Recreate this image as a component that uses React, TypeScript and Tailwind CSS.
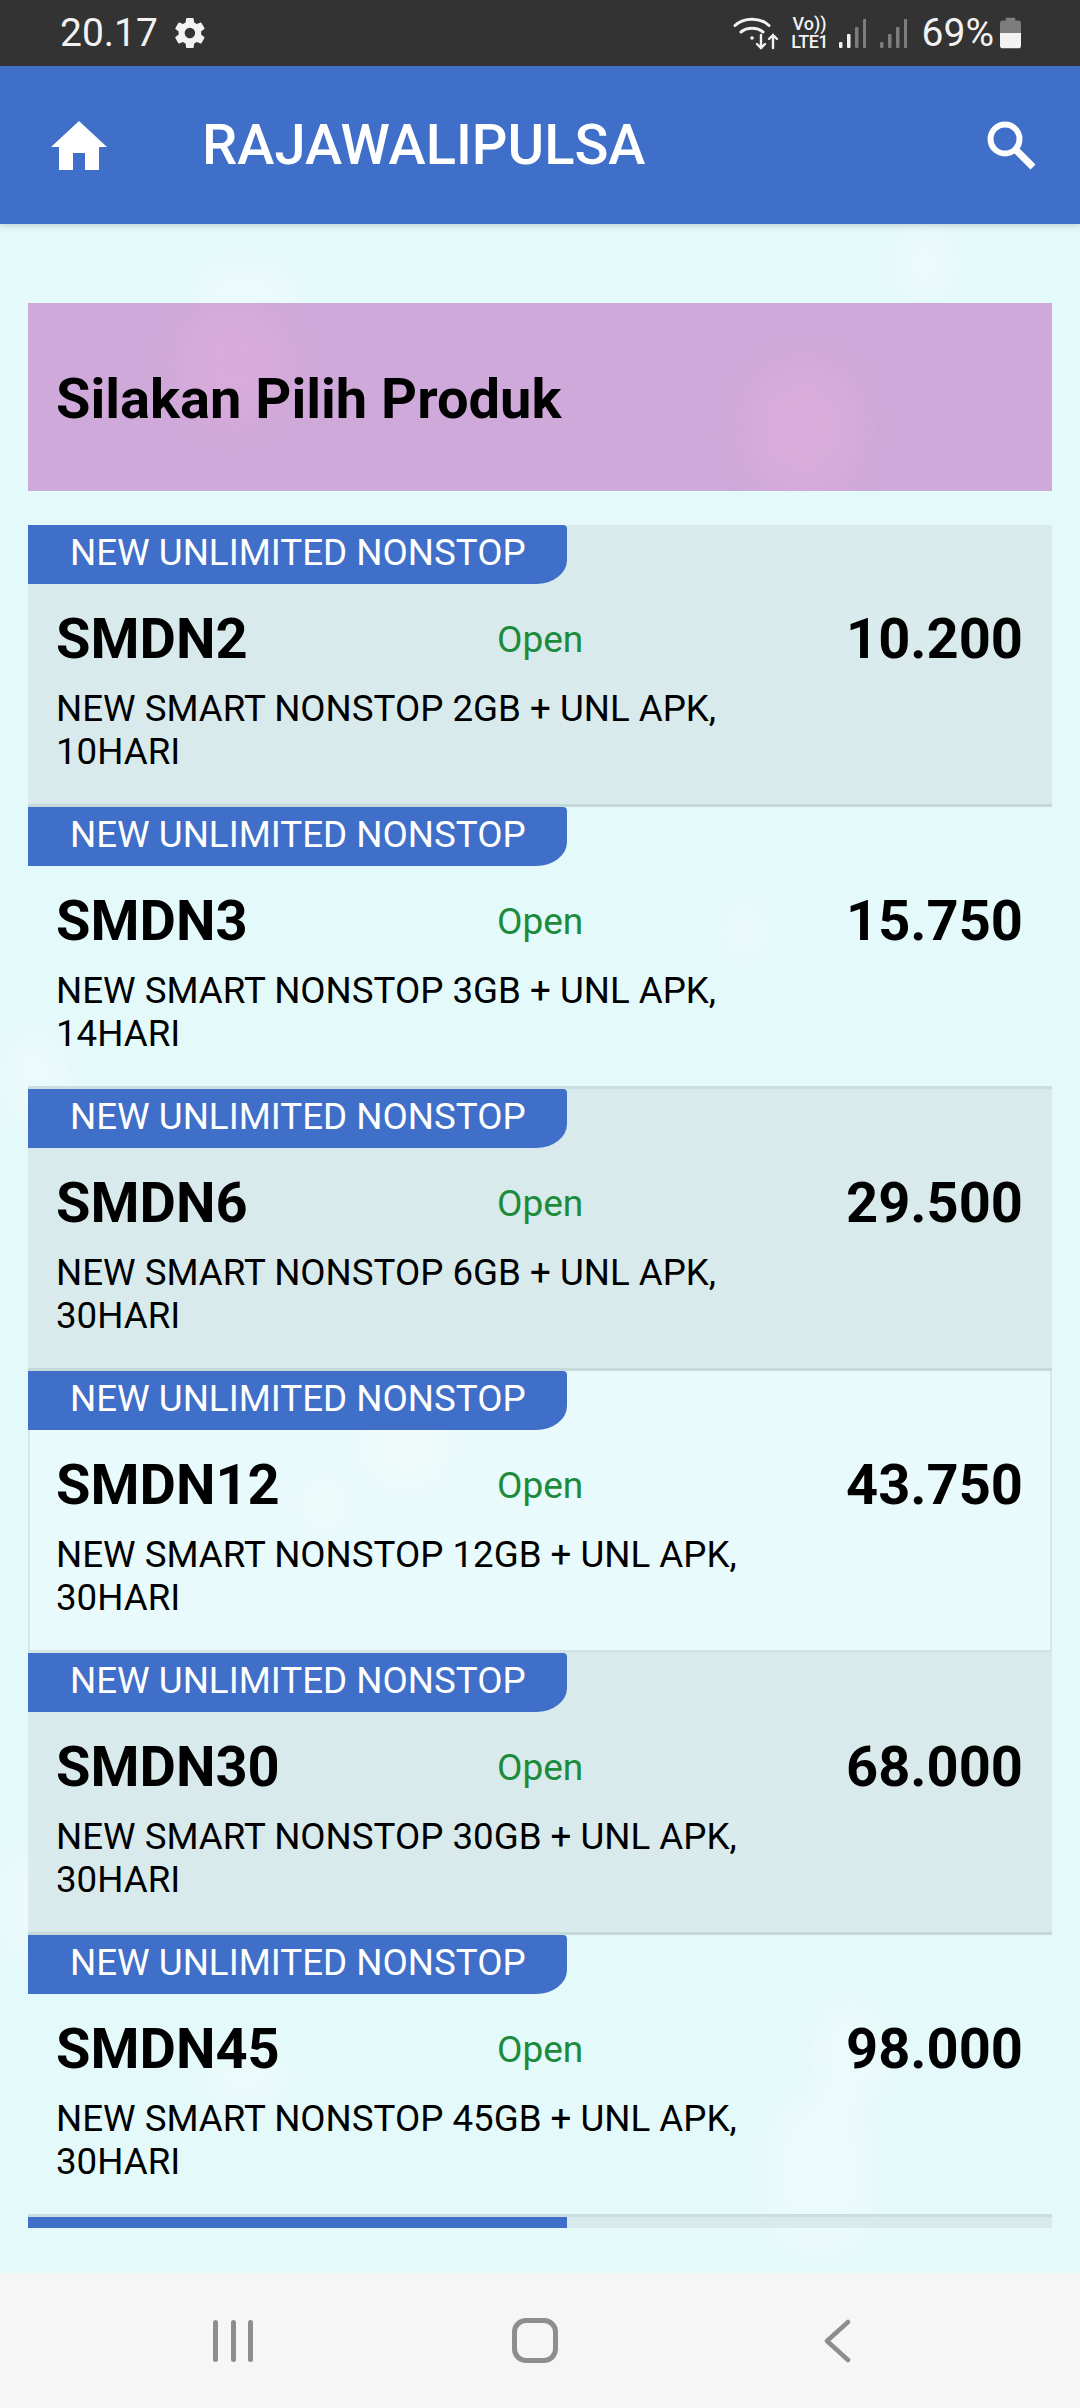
const ROBOTO = "font-['Roboto',sans-serif]";

const products = [
  { code: "SMDN2", desc: "NEW SMART NONSTOP 2GB + UNL APK,", days: "10HARI", price: "10.200", variant: "shade" },
  { code: "SMDN3", desc: "NEW SMART NONSTOP 3GB + UNL APK,", days: "14HARI", price: "15.750", variant: "plain" },
  { code: "SMDN6", desc: "NEW SMART NONSTOP 6GB + UNL APK,", days: "30HARI", price: "29.500", variant: "shade" },
  { code: "SMDN12", desc: "NEW SMART NONSTOP 12GB + UNL APK,", days: "30HARI", price: "43.750", variant: "light" },
  { code: "SMDN30", desc: "NEW SMART NONSTOP 30GB + UNL APK,", days: "30HARI", price: "68.000", variant: "shade" },
  { code: "SMDN45", desc: "NEW SMART NONSTOP 45GB + UNL APK,", days: "30HARI", price: "98.000", variant: "plain" },
];

const cardStyles: Record<string, string> = {
  shade: "border-[#c6d9da] bg-[#d6e8e9]/85",
  plain: "border-[#cbdfe1]",
  light: "border-[#d2e4e6] bg-white/20 shadow-[inset_2px_0_0_#d6e8ea,inset_-2px_0_0_#d6e8ea]",
};

// soft bokeh spots of the wallpaper
const spots = [
  { x: 890, y: 225, w: 70, h: 80 },
  { x: 190, y: 260, w: 110, h: 70 },
  { x: 850, y: 560, w: 90, h: 120 },
  { x: 420, y: 600, w: 70, h: 80 },
  { x: 720, y: 900, w: 50, h: 60 },
  { x: 0, y: 1030, w: 70, h: 100 },
  { x: 360, y: 1390, w: 90, h: 100 },
  { x: 300, y: 1480, w: 50, h: 50 },
  { x: 670, y: 1720, w: 100, h: 150 },
  { x: 0, y: 1850, w: 50, h: 110 },
  { x: 810, y: 2000, w: 80, h: 110 },
  { x: 765, y: 2090, w: 110, h: 170 },
  { x: 200, y: 2040, w: 90, h: 70 },
];

function SignalBars({ active }: { active: number }) {
  const bars = [
    { x: 0, h: 6 },
    { x: 8, h: 14 },
    { x: 16, h: 21 },
    { x: 24, h: 29 },
  ];
  return (
    <svg viewBox="0 0 27 29" className="h-[29px] w-[27px]">
      {bars.map((b, i) => (
        <rect key={b.x} x={b.x} y={29 - b.h} width="3.5" height={b.h} rx="1" fill={i < active ? "#f2f2f2" : "#7d7d7d"} />
      ))}
    </svg>
  );
}

function StatusBar() {
  return (
    <div className={`flex h-[66px] items-center justify-between bg-[#333333] pl-[60px] pr-[59px] text-[#f2f2f2] ${ROBOTO}`}>
      <div className="flex items-center gap-[17px]">
        <span className="text-[39px] leading-none">20.17</span>
        <svg viewBox="0 0 24 24" className="h-[36px] w-[36px] -ml-[3px]" fill="#f2f2f2">
          <path d="M19.4 13c.04-.33.06-.66.06-1s-.02-.67-.06-1l2.1-1.65a.5.5 0 0 0 .12-.64l-2-3.46a.5.5 0 0 0-.61-.22l-2.49 1a7.3 7.3 0 0 0-1.73-1l-.38-2.65A.49.49 0 0 0 13.92 2h-4a.49.49 0 0 0-.49.42l-.38 2.65a7.7 7.7 0 0 0-1.73 1l-2.49-1a.5.5 0 0 0-.61.22l-2 3.46a.49.49 0 0 0 .12.64L4.44 11c-.04.33-.07.67-.07 1s.03.67.07 1l-2.1 1.65a.5.5 0 0 0-.12.64l2 3.46c.12.22.39.3.61.22l2.49-1c.52.4 1.08.73 1.73 1l.38 2.65c.04.24.25.42.49.42h4c.24 0 .45-.18.49-.42l.38-2.65a7.7 7.7 0 0 0 1.73-1l2.49 1c.22.08.49 0 .61-.22l2-3.46a.5.5 0 0 0-.12-.64L19.4 13zM11.92 15.5a3.5 3.5 0 1 1 0-7 3.5 3.5 0 0 1 0 7z" />
        </svg>
      </div>
      <div className="flex items-center">
        <svg viewBox="0 0 46 36" className="h-[36px] w-[46px]" fill="none" stroke="#f2f2f2" strokeLinecap="round">
          <path d="M2 10.5C11 2 27 2 36 10.5" strokeWidth="3" />
          <path d="M8 17c6-5 16-5 22 0" strokeWidth="3" />
          <circle cx="19" cy="23" r="1.8" fill="#f2f2f2" stroke="none" />
          <path d="M28 20v13M24 29l4 4 4-4" strokeWidth="2.4" />
          <path d="M40 33V20M36 24l4-4 4 4" strokeWidth="2.4" />
        </svg>
        <div className="ml-[11px] flex w-[40px] flex-col items-center text-[18px] font-medium leading-[18px]">
          <span>Vo))</span>
          <span className="tracking-[-0.5px]">LTE1</span>
        </div>
        <div className="ml-[9px]">
          <SignalBars active={2} />
        </div>
        <div className="ml-[14px]">
          <SignalBars active={0} />
        </div>
        <span className="ml-[15px] text-[39px] leading-none">69%</span>
        <svg viewBox="0 0 22 32" className="ml-[6px] h-[32px] w-[21px]">
          <path d="M6 0h10v3h3a3 3 0 0 1 3 3v10H0V6a3 3 0 0 1 3-3h3z" fill="#7d7d7d" />
          <path d="M0 16h22v13a3 3 0 0 1-3 3H3a3 3 0 0 1-3-3z" fill="#f2f2f2" />
        </svg>
      </div>
    </div>
  );
}

function Header() {
  return (
    <div className={`relative z-10 flex h-[158px] items-center bg-[#3f6fc8] pl-[51px] pr-[44px] text-white shadow-[0_2px_6px_rgba(0,0,0,0.15)] ${ROBOTO}`}>
      <svg viewBox="0 0 56 49" className="h-[49px] w-[56px]" fill="#ffffff">
        <path d="M28 0 56 26H48V49H34V32H22V49H8V26H0z" />
      </svg>
      <span className="ml-[95px] flex-1 text-[56px] font-medium leading-none">RAJAWALIPULSA</span>
      <svg viewBox="0 0 50 50" className="h-[50px] w-[50px]" fill="none" stroke="#ffffff" strokeWidth="6">
        <circle cx="19" cy="19" r="14.5" />
        <path d="m29 29 18 18" strokeWidth="7" />
      </svg>
    </div>
  );
}

function ProductCard({ code, desc, days, price, variant }: (typeof products)[number]) {
  return (
    <div className={`h-[282px] border-b-[3px] ${cardStyles[variant]} ${ROBOTO}`}>
      <div className="flex h-[59px] w-[539px] items-center rounded-tr-[4px] rounded-br-[31px_24px] bg-[#3f6fc8] pb-[2px] pl-[42px] text-[36.75px] leading-none text-white">
        NEW UNLIMITED NONSTOP
      </div>
      <div className="mt-[26px] flex items-center pl-[28px] pr-[29px] text-black">
        <span className="w-[441px] text-[56px] font-bold leading-[56px]">{code}</span>
        <span className="flex-1 pt-[2px] text-[37px] leading-[56px] text-[#1c8b3a]">Open</span>
        <span className="text-[56px] font-bold leading-[56px]">{price}</span>
      </div>
      <div className="mt-[19px] pl-[28px] text-[36.7px] leading-[43px] text-black">
        <div>{desc}</div>
        <div>{days}</div>
      </div>
    </div>
  );
}

export default function App() {
  return (
    <div className="flex h-[2408px] w-[1080px] flex-col overflow-hidden bg-[#e3f9fa]">
      <StatusBar />
      <Header />
      <div className="relative flex-1 overflow-hidden px-[28px] pt-[79px]">
        {spots.map((s) => (
          <div
            key={`${s.x}-${s.y}`}
            className="absolute rounded-full bg-white/30 blur-[14px]"
            style={{ left: s.x, top: s.y - 224, width: s.w, height: s.h }}
          />
        ))}
        <div className="relative">
          <div className={`relative flex h-[188px] items-center overflow-hidden bg-[#cfa9d9] pl-[28px] pt-[3px] text-[56px] font-bold text-black ${ROBOTO}`}>
            <div className="absolute left-[150px] top-0 h-[120px] w-[110px] rounded-full bg-[#dcaedc]/60 blur-[16px]" />
            <div className="absolute left-[720px] top-[60px] h-[130px] w-[110px] rounded-full bg-[#dcaedc]/70 blur-[16px]" />
            <span className="relative">Silakan Pilih Produk</span>
          </div>
          <div className="mt-[34px]">
            {products.map((p) => (
              <ProductCard key={p.code} {...p} />
            ))}
          </div>
          <div className="h-[11px] bg-[#d6e8e9]/85">
            <div className="h-full w-[539px] bg-[#3f6fc8]" />
          </div>
        </div>
      </div>
      <div className="flex h-[135px] items-center bg-[#f6f6f6] pl-[213px]">
        <div className="flex h-[42px] w-[40px] justify-between">
          <div className="h-full w-[5px] rounded-full bg-[#8e8e8e]" />
          <div className="h-full w-[5px] rounded-full bg-[#8e8e8e]" />
          <div className="h-full w-[5px] rounded-full bg-[#8e8e8e]" />
        </div>
        <div className="ml-[259px] h-[45px] w-[46px] rounded-[14px] border-[5px] border-[#8e8e8e]" />
        <svg viewBox="0 0 27 44" className="ml-[266px] h-[44px] w-[27px]" fill="none" stroke="#8e8e8e" strokeWidth="4.5" strokeLinecap="round" strokeLinejoin="round">
          <path d="M24 3 3 22l21 19" />
        </svg>
      </div>
    </div>
  );
}
